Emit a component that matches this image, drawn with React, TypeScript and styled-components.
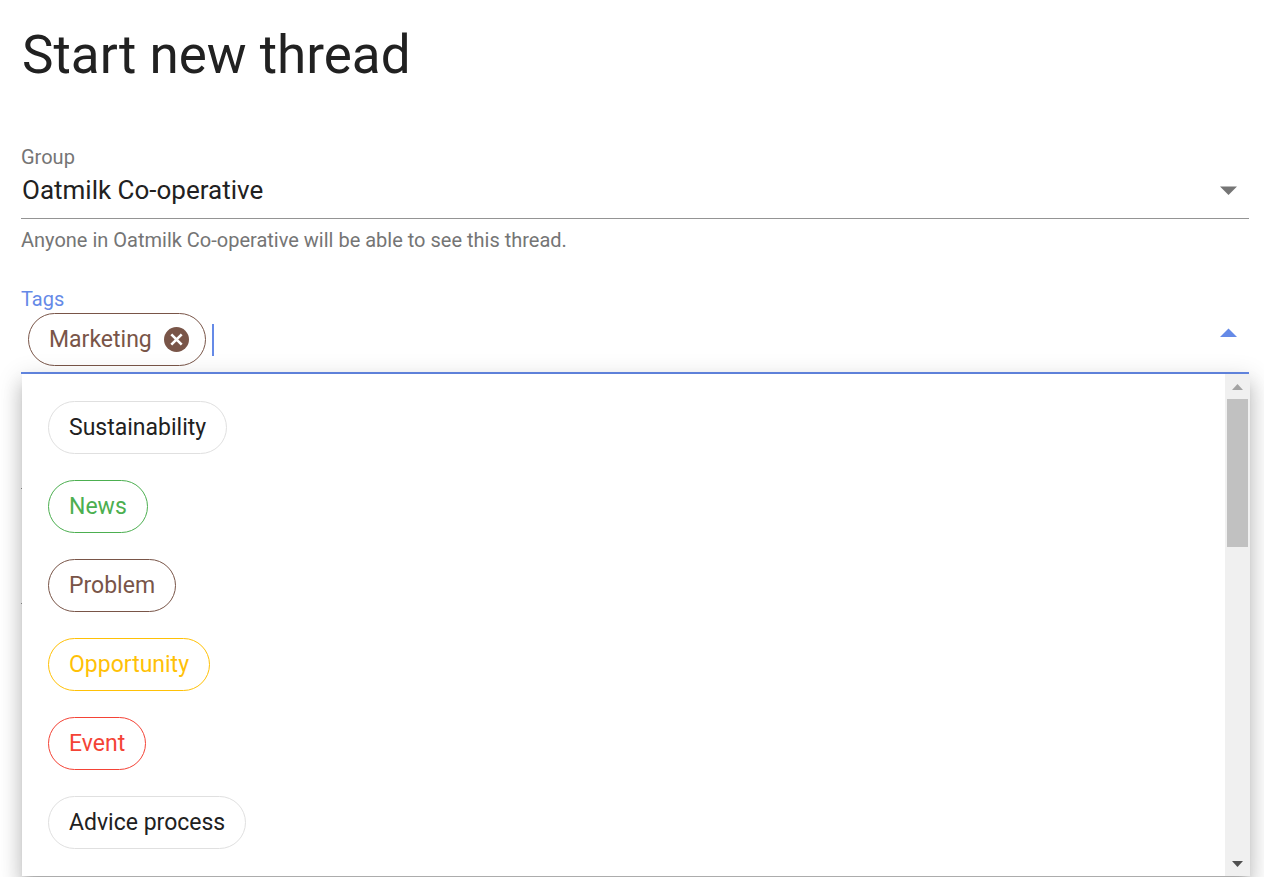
import React, { useState } from "react";
import styled, { createGlobalStyle } from "styled-components";

const blue = "#658ae7";
const brown = "#795548";

const GlobalStyle = createGlobalStyle`
  * { box-sizing: border-box; }
  body {
    margin: 0;
    background: #fff;
    color: #212121;
    font-family: Roboto, "Liberation Sans", sans-serif;
  }
`;

const Page = styled.main`
  min-height: 100vh;
  padding: 23px 15px 0 21px;
`;

const Title = styled.h1`
  margin: 0 0 59px;
  padding-left: 1px;
  font-size: 53px;
  font-weight: 400;
  line-height: 64px;
`;

const Field = styled.div`
  position: relative;
  display: flex;
  flex-direction: column;
`;

const Label = styled.label<{ $active?: boolean }>`
  font-size: 20px;
  line-height: 22px;
  color: ${(p) => (p.$active ? blue : "#757575")};
`;

const Control = styled.div<{ $active?: boolean }>`
  position: relative;
  display: flex;
  align-items: center;
  border-bottom: ${(p) => (p.$active ? `2px solid ${blue}` : "1px solid #949494")};
`;

const Select = styled.select`
  appearance: none;
  flex: 1;
  height: 50px;
  margin: 0;
  padding: 0 40px 6px 1px;
  border: 0;
  outline: 0;
  background: transparent;
  color: inherit;
  font: 400 26px/36px Roboto, "Liberation Sans", sans-serif;
`;

const Arrow = styled.svg`
  position: absolute;
  right: 12px;
  top: 18px;
  width: 17px;
  height: 9px;
  pointer-events: none;
`;

const Hint = styled.p`
  margin: 10px 0 37px;
  font-size: 20px;
  line-height: 22px;
  color: #757575;
`;

const ChipRow = styled.div`
  display: flex;
  flex: 1;
  align-items: center;
  padding: 3px 48px 6px 7px;
`;

const Chip = styled.span<{ $color?: string }>`
  display: inline-flex;
  align-items: center;
  gap: 12px;
  height: 53px;
  padding: 0 20px;
  border: 1px solid ${(p) => p.$color ?? "#e0e0e0"};
  border-radius: 27px;
  color: ${(p) => p.$color ?? "#212121"};
  font-size: 23px;
  line-height: 30px;
  white-space: nowrap;
`;

const SelectedChip = styled(Chip)`
  padding-right: 15px;
`;

const RemoveButton = styled.button`
  display: flex;
  padding: 0;
  border: 0;
  background: none;
  color: inherit;
  cursor: pointer;
`;

const Caret = styled.span`
  width: 2px;
  height: 32px;
  margin-left: 6px;
  background: ${blue};
`;

const TagInput = styled.input`
  flex: 1;
  min-width: 0;
  height: 44px;
  padding: 0;
  border: 0;
  outline: 0;
  background: transparent;
  caret-color: ${blue};
  font: 400 26px/36px Roboto, "Liberation Sans", sans-serif;
`;

const Menu = styled.div`
  position: absolute;
  z-index: 2;
  top: 100%;
  left: 1px;
  right: -1px;
  display: flex;
  background: #fff;
  box-shadow: 0 8px 8px -5px rgba(0, 0, 0, 0.2), 0 13px 17px 2px rgba(0, 0, 0, 0.14),
    0 5px 23px 3px rgba(0, 0, 0, 0.12);
`;

const Options = styled.ul`
  flex: 1;
  margin: 0;
  padding: 14px 0;
  list-style: none;
`;

const Option = styled.li`
  display: flex;
  align-items: center;
  height: 79px;
  padding: 0 26px;
  cursor: pointer;
`;

const ScrollTrack = styled.div`
  display: flex;
  flex-direction: column;
  align-items: center;
  width: 25px;
  background: #f0f0f0;
`;

const ScrollButton = styled.button`
  display: flex;
  align-items: center;
  justify-content: center;
  width: 25px;
  height: 25px;
  padding: 0;
  border: 0;
  background: none;
`;

const ScrollThumb = styled.div`
  width: 21px;
  height: 148px;
  margin-bottom: auto;
  background: #c1c1c1;
`;

const Underlay = styled.div`
  display: flex;
  flex-direction: column;
`;

const LineInput = styled.input`
  height: 115px;
  padding: 60px 0 0;
  border: 0;
  border-bottom: 1px solid #949494;
  outline: 0;
  background: transparent;
`;

const tags = [
  { name: "Sustainability" },
  { name: "News", color: "#4caf50" },
  { name: "Problem", color: brown },
  { name: "Opportunity", color: "#ffc107" },
  { name: "Event", color: "#f44336" },
  { name: "Advice process" },
];

export default function App() {
  const [query, setQuery] = useState("");
  return (
    <>
      <GlobalStyle />
      <Page>
        <Title>Start new thread</Title>
        <Field>
          <Label htmlFor="group">Group</Label>
          <Control>
            <Select id="group">
              <option>Oatmilk Co-operative</option>
            </Select>
            <Arrow viewBox="0 0 17 9" aria-hidden="true">
              <path d="M0 .5h17L8.500 9z" fill="#757575" />
            </Arrow>
          </Control>
          <Hint>Anyone in Oatmilk Co-operative will be able to see this thread.</Hint>
        </Field>
        <Field>
          <Label htmlFor="tags" $active>Tags</Label>
          <Control $active>
            <ChipRow>
              <SelectedChip $color={brown}>
                Marketing
                <RemoveButton type="button" aria-label="Remove Marketing">
                  <svg width="26" height="26" viewBox="0 0 26 26" aria-hidden="true">
                    <circle cx="12.500" cy="12.500" r="12.500" fill="currentColor" />
                    <path d="M7.300 7.300l10.400 10.400M17.700 7.300L7.300 17.700" stroke="#fff" strokeWidth="2.600" />
                  </svg>
                </RemoveButton>
              </SelectedChip>
              <Caret />
              <TagInput id="tags" value={query} onChange={(e) => setQuery(e.target.value)} />
            </ChipRow>
            <Arrow viewBox="0 0 17 9" aria-hidden="true">
              <path d="M0 9h17L8.500 .5z" fill={blue} />
            </Arrow>
          </Control>
          <Menu>
            <Options role="listbox" aria-label="Tags">
              {tags.map((tag) => (
                <Option key={tag.name} role="option" aria-selected="false">
                  <Chip $color={tag.color}>{tag.name}</Chip>
                </Option>
              ))}
            </Options>
            <ScrollTrack>
              <ScrollButton type="button" aria-label="Scroll up">
                <svg width="11" height="6" viewBox="0 0 11 6"><path d="M0 6h11L5.500 0z" fill="#a3a3a3" /></svg>
              </ScrollButton>
              <ScrollThumb />
              <ScrollButton type="button" aria-label="Scroll down">
                <svg width="11" height="6" viewBox="0 0 11 6"><path d="M0 0h11L5.500 6z" fill="#505050" /></svg>
              </ScrollButton>
            </ScrollTrack>
          </Menu>
        </Field>
        <Underlay>
          <LineInput aria-label="Title" />
          <LineInput aria-label="Recipients" />
        </Underlay>
      </Page>
    </>
  );
}
